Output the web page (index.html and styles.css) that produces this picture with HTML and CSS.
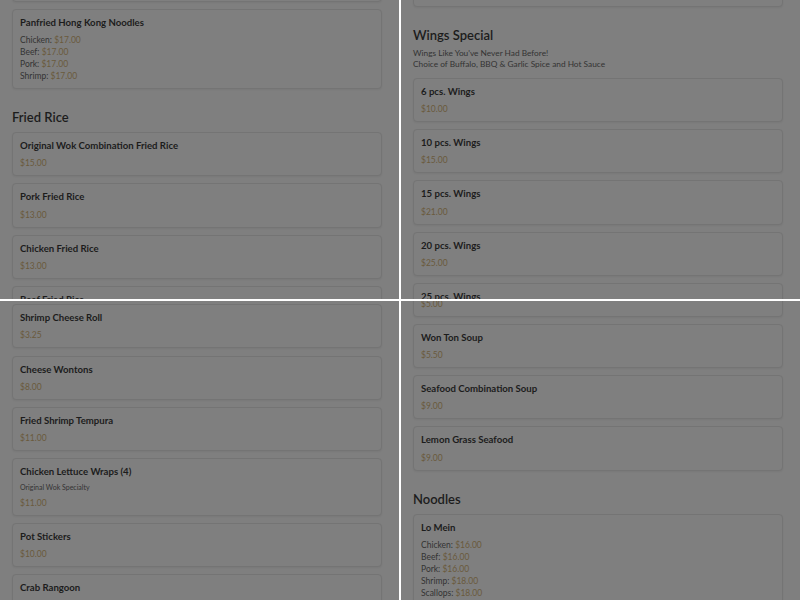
FILE: index.html
```html
<!DOCTYPE html>
<html lang="en">
<head>
    <meta charset="UTF-8" />
    <meta name="viewport" content="width=device-width, initial-scale=1" />
    <title>Original Wok | Menu</title>
    <link rel="stylesheet" href="styles.css">
</head>
<body>
    <div class="grid">

        <!-- noodles / fried rice -->
        <div class="panel panel-rice">
            <div class="menu">
                <div class="item">
                    <h3>Chow Fun</h3>
                    <p class="price">$16.00</p>
                </div>
                <div class="item">
                    <h3>Panfried Hong Kong Noodles</h3>
                    <ul class="prices">
                        <li><span>Chicken:</span> $17.00</li>
                        <li><span>Beef:</span> $17.00</li>
                        <li><span>Pork:</span> $17.00</li>
                        <li><span>Shrimp:</span> $17.00</li>
                    </ul>
                </div>

                <h2 class="section-title">Fried Rice</h2>
                <div class="item">
                    <h3>Original Wok Combination Fried Rice</h3>
                    <p class="price">$15.00</p>
                </div>
                <div class="item">
                    <h3>Pork Fried Rice</h3>
                    <p class="price">$13.00</p>
                </div>
                <div class="item">
                    <h3>Chicken Fried Rice</h3>
                    <p class="price">$13.00</p>
                </div>
                <div class="item">
                    <h3>Beef Fried Rice</h3>
                    <p class="price">$14.00</p>
                </div>
            </div>
        </div>

        <!-- wings -->
        <div class="panel panel-wings">
            <div class="menu">
                <div class="item">
                    <h3>Egg Rolls (2)</h3>
                    <p class="price">$4.00</p>
                </div>

                <h2 class="section-title">Wings Special</h2>
                <p class="section-note">Wings Like You've Never Had Before!<br>Choice of Buffalo, BBQ &amp; Garlic Spice and Hot Sauce</p>
                <div class="item">
                    <h3>6 pcs. Wings</h3>
                    <p class="price">$10.00</p>
                </div>
                <div class="item">
                    <h3>10 pcs. Wings</h3>
                    <p class="price">$15.00</p>
                </div>
                <div class="item">
                    <h3>15 pcs. Wings</h3>
                    <p class="price">$21.00</p>
                </div>
                <div class="item">
                    <h3>20 pcs. Wings</h3>
                    <p class="price">$25.00</p>
                </div>
                <div class="item">
                    <h3>25 pcs. Wings</h3>
                    <p class="price">$30.00</p>
                </div>
            </div>
        </div>

        <!-- appetizers -->
        <div class="panel panel-apps">
            <div class="menu">
                <div class="item">
                    <h3>Shrimp Cheese Roll</h3>
                    <p class="price">$3.25</p>
                </div>
                <div class="item">
                    <h3>Cheese Wontons</h3>
                    <p class="price">$8.00</p>
                </div>
                <div class="item">
                    <h3>Fried Shrimp Tempura</h3>
                    <p class="price">$11.00</p>
                </div>
                <div class="item">
                    <h3>Chicken Lettuce Wraps (4)</h3>
                    <p class="note">Original Wok Specialty</p>
                    <p class="price">$11.00</p>
                </div>
                <div class="item">
                    <h3>Pot Stickers</h3>
                    <p class="price">$10.00</p>
                </div>
                <div class="item">
                    <h3>Crab Rangoon</h3>
                    <p class="price">$8.00</p>
                </div>
            </div>
        </div>

        <!-- soups / noodles -->
        <div class="panel panel-soups">
            <div class="menu">
                <div class="item">
                    <h3>Hot &amp; Sour Soup</h3>
                    <p class="price">$5.00</p>
                </div>
                <div class="item">
                    <h3>Won Ton Soup</h3>
                    <p class="price">$5.50</p>
                </div>
                <div class="item">
                    <h3>Seafood Combination Soup</h3>
                    <p class="price">$9.00</p>
                </div>
                <div class="item">
                    <h3>Lemon Grass Seafood</h3>
                    <p class="price">$9.00</p>
                </div>

                <h2 class="section-title">Noodles</h2>
                <div class="item">
                    <h3>Lo Mein</h3>
                    <ul class="prices">
                        <li><span>Chicken:</span> $16.00</li>
                        <li><span>Beef:</span> $16.00</li>
                        <li><span>Pork:</span> $16.00</li>
                        <li><span>Shrimp:</span> $18.00</li>
                        <li><span>Scallops:</span> $18.00</li>
                    </ul>
                </div>
            </div>
        </div>

    </div>
</body>
</html>
```

FILE: styles.css
```css
:root {
    --backdrop: #7f7f7f;
    --card-border: #747474;
    --title-color: #1c1c1c;
    --text-color: #333;
    --price-color: #6a5a3c;
}

body {
    margin: 0;
    background-color: #fff;
    font-family: 'Lato', 'Open Sans', sans-serif;
    color: var(--text-color);
}

.grid {
    display: grid;
    grid-template-columns: 399px 399px;
    grid-template-rows: 299px 299px;
    gap: 2px;
}

.panel {
    overflow: hidden;
    background-color: var(--backdrop);
}

.menu {
    padding: 0 17px 0 12px;
}

/* how far each panel is scrolled */
.panel-rice .menu {
    margin-top: -42.3px;
}

.panel-wings .menu {
    margin-top: -37px;
}

.panel-apps .menu {
    margin-top: 3.3px;
}

.panel-soups .menu {
    margin-top: -28.5px;
}

.section-title {
    margin: 20px 0 7px;
    font-size: 13px;
    line-height: 16px;
    font-weight: 600;
    color: var(--title-color);
}

.section-note {
    margin: -2.5px 0 8.2px;
    font-size: 8.3px;
    line-height: 11px;
}

.item {
    background-color: var(--backdrop);
    border: 1px solid var(--card-border);
    border-radius: 4px;
    padding: 6px 8px 6px 7px;
    margin-bottom: 7.1px;
    box-shadow: 0 1px 2px rgba(0,0,0,0.05);
}

.item h3 {
    margin: 0 0 4.2px;
    font-size: 9.6px;
    line-height: 14px;
    font-weight: 700;
    color: var(--title-color);
}

.note {
    margin: -1px 0 4.2px;
    font-size: 7px;
    line-height: 10px;
}

.price {
    margin: 0;
    font-size: 8.5px;
    line-height: 12px;
    color: var(--price-color);
}

.prices {
    list-style: none;
    margin: 2px 0 0;
    padding: 0;
    font-size: 8.5px;
    line-height: 12px;
    color: var(--price-color);
}

.prices span {
    color: var(--text-color);
}
```
